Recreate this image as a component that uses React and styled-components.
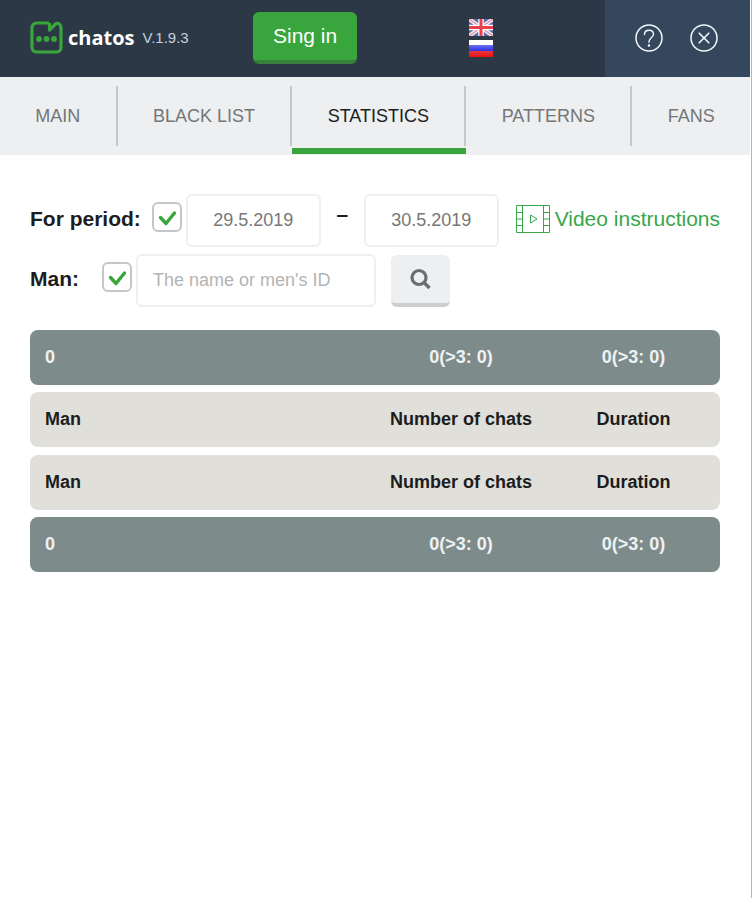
import React, { useState } from "react";
import styled, { createGlobalStyle } from "styled-components";

const GlobalStyle = createGlobalStyle`
  * {
    box-sizing: border-box;
  }
  body {
    margin: 0;
    background: #fff;
    color: #1b1d20;
    font-family: "Liberation Sans", Arial, sans-serif;
  }
  button, input {
    font-family: inherit;
  }
`;

const Window = styled.div`
  min-height: 100vh;
  padding-right: 1px;
  border-right: 1px solid #b4b6b8;
`;

const Header = styled.header`
  display: flex;
  align-items: stretch;
  height: 77px;
  padding-left: 30px;
  background: #2c3846;
`;

const Brand = styled.div`
  display: flex;
  align-items: center;
  width: 223px;
  padding-bottom: 2px;
`;

const BrandName = styled.span`
  margin: 0 8px 0 5px;
  color: #fff;
  font-family: "Open Sans", sans-serif;
  font-size: 20px;
  font-weight: 700;
  line-height: 24px;
`;

const Version = styled.span`
  color: #c3cfdf;
  font-size: 15px;
`;

const SignIn = styled.button`
  align-self: flex-start;
  height: 52px;
  margin-top: 12px;
  padding: 0 20px;
  border: 0;
  border-bottom: 4px solid #37813c;
  border-radius: 6px;
  background: #38a63c;
  color: #fff;
  font-size: 21px;
  white-space: nowrap;
  cursor: pointer;
`;

const Languages = styled.div`
  display: flex;
  flex-direction: column;
  justify-content: center;
  gap: 4px;
  margin: 0 auto;
  padding-bottom: 2px;
`;

const IconButton = styled.button`
  display: flex;
  padding: 0;
  border: 0;
  background: none;
  cursor: pointer;
`;

const WindowActions = styled.div`
  display: flex;
  align-items: center;
  justify-content: space-between;
  width: 145px;
  padding: 0 32px 2px 30px;
  background: #35475c;
`;

const Tabs = styled.ul`
  display: flex;
  height: 78px;
  margin: 0;
  padding: 9px 0 0;
  background: #edeff1;
  list-style: none;
`;

const Tab = styled.li`
  flex: 1 1 auto;
  display: flex;
  flex-direction: column;
  gap: 2px;
  &::after {
    content: "";
    height: 6px;
    background: ${({ $active }) => ($active ? "#38a63c" : "transparent")};
  }
`;

const TabLink = styled.a`
  display: flex;
  align-items: center;
  justify-content: center;
  height: 60px;
  padding: 0 35px;
  border-right: ${({ $last }) => ($last ? "0" : "2px solid #c6c8ca")};
  color: ${({ $active }) => ($active ? "#1b1d20" : "#747678")};
  font-size: 18px;
  text-decoration: none;
  white-space: nowrap;
`;

const Content = styled.main`
  padding: 39px 30px;
`;

const Filters = styled.form`
  display: flex;
  flex-direction: column;
  gap: 7px;
  margin-bottom: 23px;
`;

const FilterRow = styled.div`
  display: flex;
  align-items: center;
  height: 53px;
`;

const FilterLabel = styled.label`
  min-width: 61px;
  margin-right: 11px;
  padding-bottom: 4px;
  font-size: 21px;
  font-weight: 700;
  line-height: 24px;
  white-space: nowrap;
`;

const CheckWrap = styled.span`
  position: relative;
  align-self: flex-start;
  flex: none;
  width: 30px;
  height: 30px;
  margin: 8px 4px 0 0;
  svg {
    position: absolute;
    inset: 0;
    pointer-events: none;
  }
`;

const CheckInput = styled.input`
  display: block;
  width: 30px;
  height: 30px;
  margin: 0;
  border: 2px solid #c6c6c8;
  border-radius: 6px;
  background: #fff;
  appearance: none;
  cursor: pointer;
`;

const TextInput = styled.input`
  width: ${({ $wide }) => ($wide ? "240px" : "135px")};
  height: 53px;
  padding: 0 15px;
  border: 2px solid #efefef;
  border-radius: 6px;
  background: #fff;
  color: #777;
  font-size: 18px;
  text-align: ${({ $wide }) => ($wide ? "left" : "center")};
  &::placeholder {
    color: #b4b4b4;
    opacity: 1;
  }
`;

const Dash = styled.span`
  align-self: flex-start;
  width: 43px;
  font-size: 21px;
  font-weight: 700;
  line-height: 40px;
  text-align: center;
`;

const SearchButton = styled.button`
  display: flex;
  align-items: center;
  justify-content: center;
  width: 59px;
  height: 52px;
  margin-left: 15px;
  padding: 0;
  border: 0;
  border-bottom: 4px solid #cdcdce;
  border-radius: 6px;
  background: #edeff1;
  cursor: pointer;
`;

const VideoLink = styled.a`
  display: flex;
  align-items: center;
  gap: 5px;
  margin-left: auto;
  padding-bottom: 4px;
  color: #38a64a;
  font-size: 21px;
  line-height: 24px;
  text-decoration: none;
  white-space: nowrap;
`;

const Tables = styled.div`
  display: flex;
  flex-direction: column;
  gap: 8px;
`;

const Table = styled.table`
  display: flex;
  flex-direction: column;
  gap: 7px;
  font-size: 18px;
  font-weight: 700;
`;

const RowGroup = styled.tbody`
  display: block;
`;

const Row = styled.tr`
  display: grid;
  grid-template-columns: 315fr 202fr 143fr;
  align-items: center;
  height: 55px;
  padding: 0 15px;
  border-radius: 8px;
  background: ${({ $total }) => ($total ? "#7e8b8b" : "#e0dfda")};
  color: ${({ $total }) => ($total ? "#eef2f3" : "#1b1d20")};
`;

const Cell = styled.td`
  padding: 0;
  text-align: center;
  &:first-child {
    text-align: left;
  }
`;

const LogoIcon = () => (
  <svg width="33" height="33" viewBox="0 0 33 33" fill="none" aria-hidden="true">
    <path
      d="M19 2H6.500a4.500 4.500 0 0 0-4.500 4.500v20a4.500 4.500 0 0 0 4.500 4.500h20a4.500 4.500 0 0 0 4.500-4.500V6.500C31 4 28.500 1.500 26 2.500L19.500 9V2"
      stroke="#38a63c"
      strokeWidth="3.200"
      strokeLinejoin="round"
    />
    <circle cx="9" cy="18" r="2.900" fill="#38a63c" />
    <circle cx="16.500" cy="18" r="2.900" fill="#38a63c" />
    <circle cx="24" cy="18" r="2.900" fill="#38a63c" />
  </svg>
);

const BritishFlag = () => (
  <svg width="24" height="17" viewBox="0 0 24 17" aria-hidden="true">
    <rect width="24" height="17" fill="#5d68ad" />
    <path d="M0 0l24 17M24 0L0 17" stroke="#f1f0f8" strokeWidth="4" />
    <path d="M0 0l24 17M24 0L0 17" stroke="#e88c98" strokeWidth="1.300" />
    <path d="M12 0v17M0 8.500h24" stroke="#fff" strokeWidth="5.500" />
    <path d="M12 0v17M0 8.500h24" stroke="#e8404c" strokeWidth="3" />
  </svg>
);

const RussianFlag = () => (
  <svg width="24" height="17" viewBox="0 0 24 17" aria-hidden="true">
    <defs>
      <linearGradient id="blueBand" x1="0" y1="0" x2="0" y2="1">
        <stop offset="0" stopColor="#6c70f0" />
        <stop offset="1" stopColor="#2222e0" />
      </linearGradient>
      <linearGradient id="redBand" x1="0" y1="0" x2="0" y2="1">
        <stop offset="0" stopColor="#e83a3c" />
        <stop offset="1" stopColor="#ea1010" />
      </linearGradient>
    </defs>
    <rect width="24" height="6" fill="#fff" />
    <rect y="5" width="24" height="7" fill="url(#blueBand)" />
    <rect y="11" width="24" height="6" fill="url(#redBand)" />
  </svg>
);

const HelpIcon = () => (
  <svg width="28" height="28" viewBox="0 0 28 28" fill="none" stroke="#f2f8fc" aria-hidden="true">
    <circle cx="14" cy="14" r="13" strokeWidth="1.500" />
    <path
      d="M9.500 10.500c0-2.700 2-4.300 4.500-4.300s4.500 1.600 4.500 4.100c0 3.400-4.500 3.600-4.500 7.200v.8"
      strokeWidth="1.400"
      strokeLinecap="round"
    />
    <circle cx="14" cy="21.500" r="1.200" fill="#f2f8fc" stroke="none" />
  </svg>
);

const CloseIcon = () => (
  <svg width="28" height="28" viewBox="0 0 28 28" fill="none" stroke="#f2f8fc" aria-hidden="true">
    <circle cx="14" cy="14" r="13" strokeWidth="1.500" />
    <path d="M9.200 9.200l9.600 9.600M18.800 9.200l-9.600 9.600" strokeWidth="1.600" strokeLinecap="round" />
  </svg>
);

const CheckIcon = () => (
  <svg width="30" height="30" viewBox="0 0 30 30" fill="none" aria-hidden="true">
    <path
      d="M8.500 15.500l5.500 6L22.500 11"
      stroke="#38a63c"
      strokeWidth="3.400"
      strokeLinecap="round"
      strokeLinejoin="round"
    />
  </svg>
);

const SearchIcon = () => (
  <svg width="22" height="22" viewBox="0 0 22 22" fill="none" stroke="#6b6d6f" aria-hidden="true">
    <circle cx="9" cy="9.500" r="7" strokeWidth="3.200" />
    <path d="M14 14.500l5.500 5.500" strokeWidth="3.400" />
  </svg>
);

const FilmIcon = () => (
  <svg width="34" height="28" viewBox="0 0 34 28" fill="none" stroke="#38a64a" aria-hidden="true">
    <path d="M.5.5h33v27H.5zM6.500.5v27M27.500.5v27M.5 7.500h6M.5 14h6M.5 20.500h6M27.500 7.500h6M27.500 14h6M27.500 20.500h6" />
    <path d="M14.500 10v8l6.500-4z" />
  </svg>
);

const tabs = ["MAIN", "BLACK LIST", "STATISTICS", "PATTERNS", "FANS"];

const Checkbox = ({ id, name, checked, onChange }) => (
  <CheckWrap>
    <CheckInput type="checkbox" id={id} name={name} checked={checked} onChange={onChange} />
    {checked && <CheckIcon />}
  </CheckWrap>
);

const TotalRow = () => (
  <RowGroup>
    <Row $total>
      <Cell>0</Cell>
      <Cell>0(&gt;3: 0)</Cell>
      <Cell>0(&gt;3: 0)</Cell>
    </Row>
  </RowGroup>
);

const HeadingRow = () => (
  <RowGroup>
    <Row>
      <Cell as="th" scope="col">Man</Cell>
      <Cell as="th" scope="col">Number of chats</Cell>
      <Cell as="th" scope="col">Duration</Cell>
    </Row>
  </RowGroup>
);

const App = () => {
  const [activeTab, setActiveTab] = useState("STATISTICS");
  const [filters, setFilters] = useState({
    byPeriod: true,
    byMan: true,
    from: "29.5.2019",
    to: "30.5.2019",
    man: "",
  });

  const handleFilters = ({ target }) => {
    const value = target.type === "checkbox" ? target.checked : target.value;
    setFilters((prevState) => ({ ...prevState, [target.name]: value }));
  };

  return (
    <Window>
      <GlobalStyle />
      <Header>
        <Brand>
          <LogoIcon />
          <BrandName>chatos</BrandName>
          <Version>V.1.9.3</Version>
        </Brand>
        <SignIn type="button">Sing in</SignIn>
        <Languages>
          <IconButton type="button" aria-label="English">
            <BritishFlag />
          </IconButton>
          <IconButton type="button" aria-label="Russian">
            <RussianFlag />
          </IconButton>
        </Languages>
        <WindowActions>
          <IconButton type="button" aria-label="Help">
            <HelpIcon />
          </IconButton>
          <IconButton type="button" aria-label="Close">
            <CloseIcon />
          </IconButton>
        </WindowActions>
      </Header>
      <nav>
        <Tabs>
          {tabs.map((tab, index) => (
            <Tab key={tab} $active={tab === activeTab}>
              <TabLink
                href="#"
                $active={tab === activeTab}
                $last={index === tabs.length - 1}
                onClick={() => setActiveTab(tab)}
              >
                {tab}
              </TabLink>
            </Tab>
          ))}
        </Tabs>
      </nav>
      <Content>
        <Filters onSubmit={(e) => e.preventDefault()}>
          <FilterRow>
            <FilterLabel htmlFor="byPeriod">For period:</FilterLabel>
            <Checkbox id="byPeriod" name="byPeriod" checked={filters.byPeriod} onChange={handleFilters} />
            <TextInput name="from" aria-label="From" value={filters.from} onChange={handleFilters} />
            <Dash>–</Dash>
            <TextInput name="to" aria-label="To" value={filters.to} onChange={handleFilters} />
            <VideoLink href="#">
              <FilmIcon />
              Video instructions
            </VideoLink>
          </FilterRow>
          <FilterRow>
            <FilterLabel htmlFor="byMan">Man:</FilterLabel>
            <Checkbox id="byMan" name="byMan" checked={filters.byMan} onChange={handleFilters} />
            <TextInput
              $wide
              name="man"
              aria-label="Man"
              placeholder="The name or men's ID"
              value={filters.man}
              onChange={handleFilters}
            />
            <SearchButton type="submit" aria-label="Search">
              <SearchIcon />
            </SearchButton>
          </FilterRow>
        </Filters>
        <Tables>
          <Table>
            <TotalRow />
            <HeadingRow />
          </Table>
          <Table>
            <HeadingRow />
            <TotalRow />
          </Table>
        </Tables>
      </Content>
    </Window>
  );
};

export default App;
